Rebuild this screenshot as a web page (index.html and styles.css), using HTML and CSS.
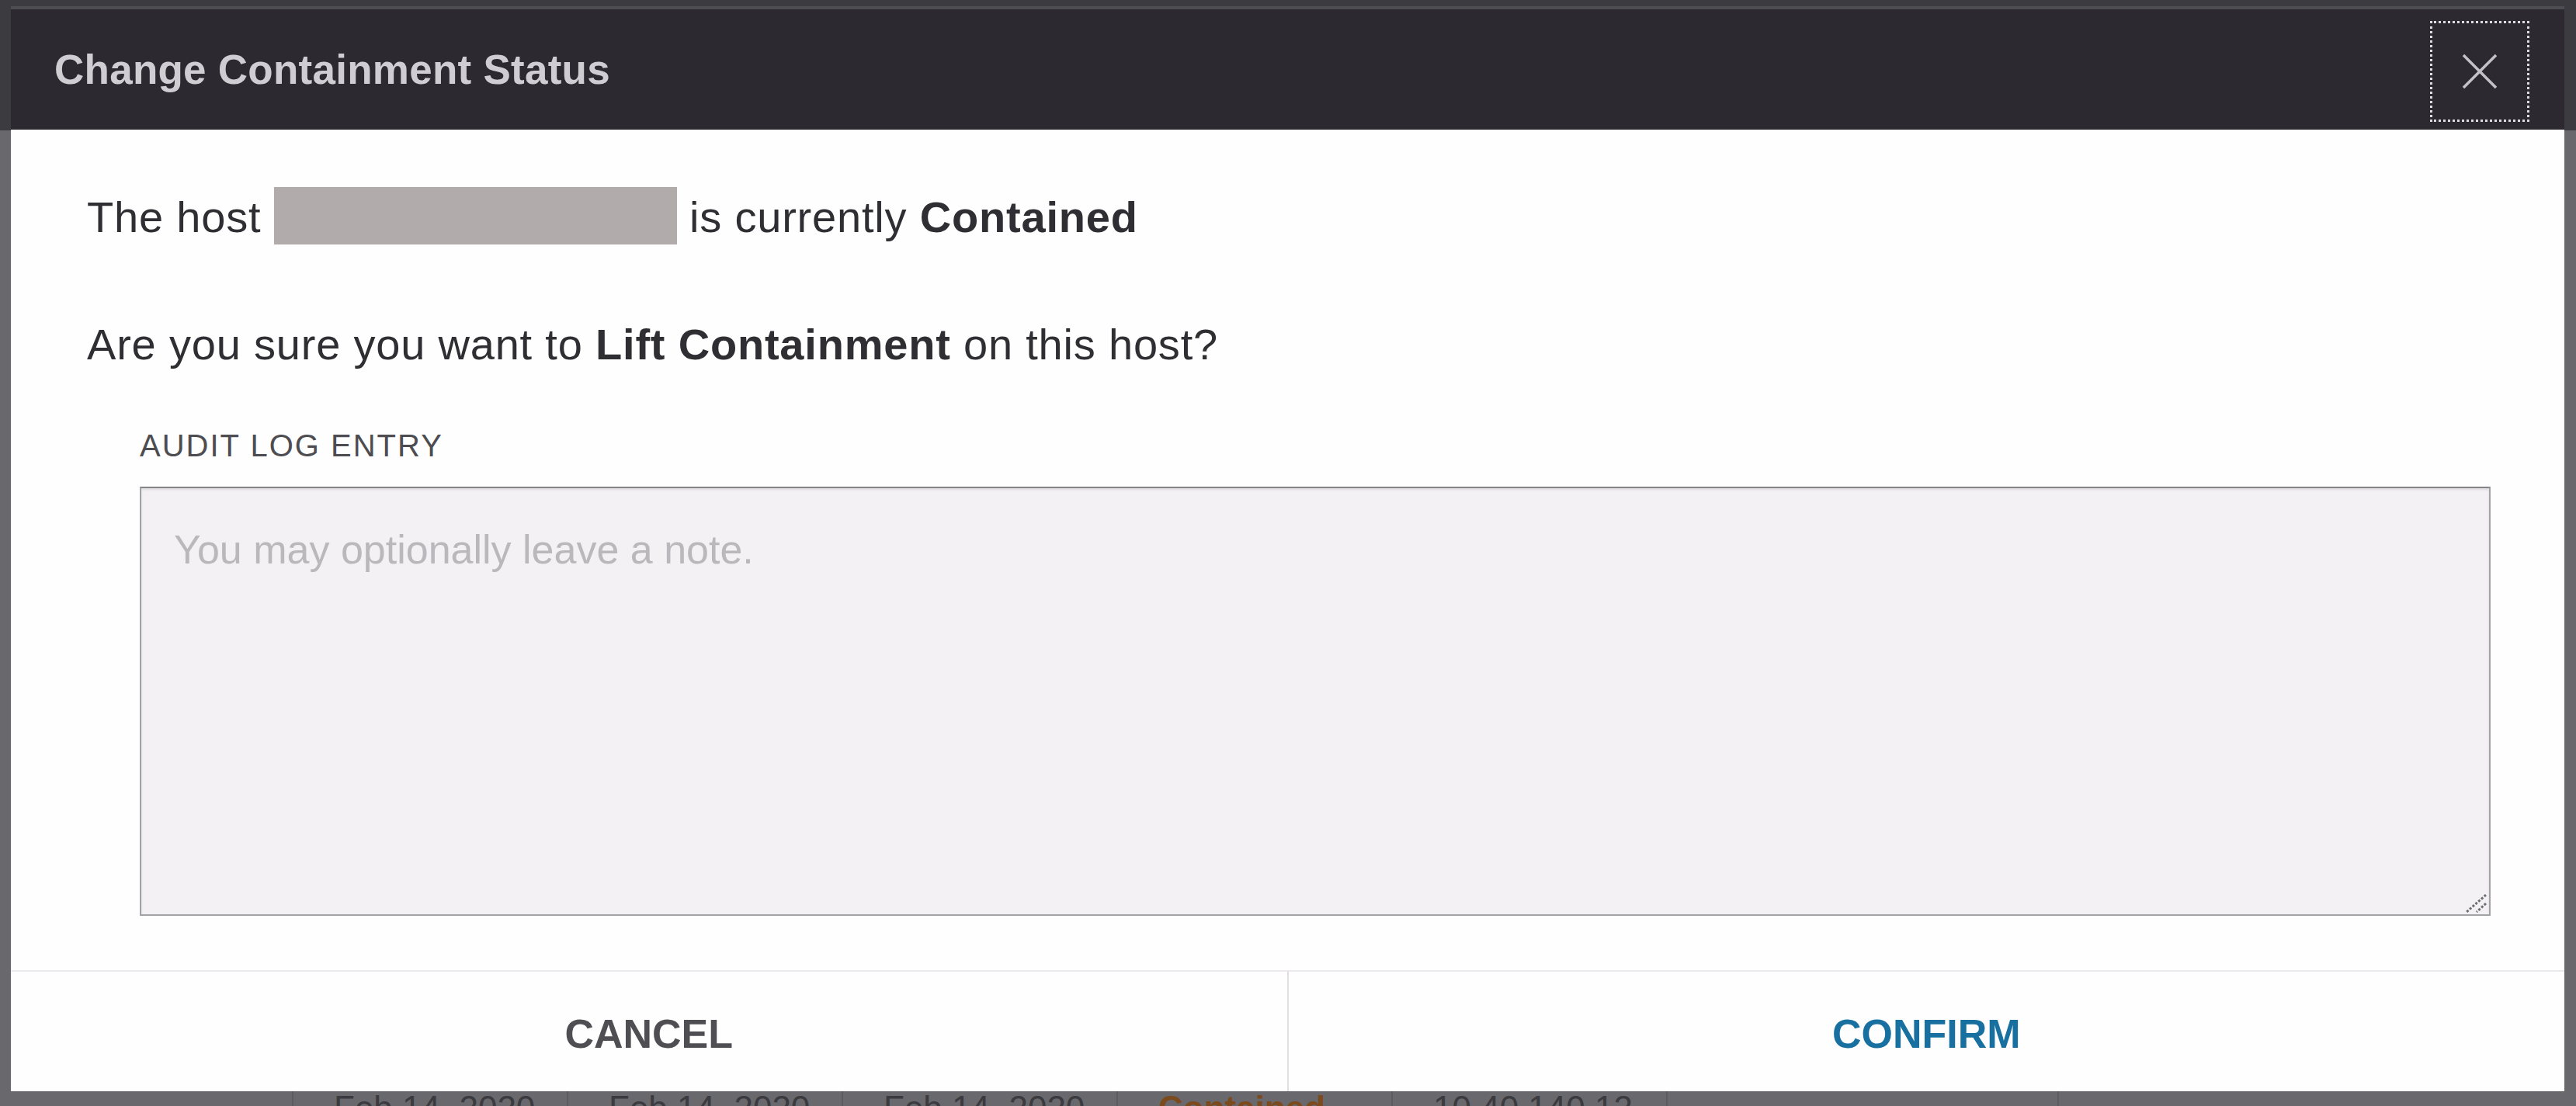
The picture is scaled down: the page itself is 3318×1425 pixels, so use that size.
FILE: index.html
```html
<!DOCTYPE html>
<html>
<head>
  <meta charset="utf-8">
  <title>Change Containment Status</title>
  <link rel="stylesheet" href="styles.css">
</head>
<body>
  <div class="backdrop">
    <div class="modal" role="dialog" aria-labelledby="modal-title">
      <div class="modal-header">
        <h2 class="modal-title" id="modal-title">Change Containment Status</h2>
        <button class="modal-close" type="button" aria-label="Close">
          <svg viewBox="0 0 46 46"><path d="M2 2 L44 44 M44 2 L2 44"/></svg>
        </button>
      </div>

      <div class="modal-body">
        <p>The host <span class="redacted"></span> is currently <strong>Contained</strong></p>
        <p class="question">Are you sure you want to <strong>Lift Containment</strong> on this host?</p>

        <div class="field">
          <label for="audit-note">Audit Log Entry</label>
          <div class="note-wrap">
            <textarea id="audit-note" placeholder="You may optionally leave a note."></textarea>
            <svg class="grip" viewBox="0 0 28 24"><path d="M26 1 L1 23 M26 12 L14 23"/></svg>
          </div>
        </div>
      </div>

      <div class="modal-footer">
        <button class="btn btn-cancel" type="button">Cancel</button>
        <button class="btn btn-confirm" type="button">Confirm</button>
      </div>
    </div>

    <!-- hosts table underneath the dialog -->
    <div class="table-peek">
      <div class="cell">Feb 14, 2020</div>
      <div class="cell">Feb 14, 2020</div>
      <div class="cell">Feb 14, 2020</div>
      <div class="cell state">Contained</div>
      <div class="cell">10.40.140.12</div>
      <div class="cell wide"></div>
      <div class="cell"></div>
    </div>
  </div>
</body>
</html>
```

FILE: styles.css
```css
html, body {
  margin: 0;
  height: 100%;
}

body {
  background: linear-gradient(#3c3b40 0, #3c3b40 168px, #69686d 168px);
  font-family: "Liberation Sans", Arial, sans-serif;
  overflow: hidden;
}

.backdrop {
  padding: 8px 15px 0 14px;
}

.modal {
  height: 1398px;
  background: #fefefe;
  display: flex;
  flex-direction: column;
}

/* header bar */
.modal-header {
  height: 155px;
  border-top: 4px solid #4e4d52;
  background: #2c2a30;
  display: flex;
  align-items: center;
  justify-content: space-between;
  padding: 0 45px 0 56px;
}

.modal-title {
  margin: 0;
  font-size: 53px;
  font-weight: bold;
  letter-spacing: 0.25px;
  color: #cfcdd2;
}

.modal-close {
  width: 128px;
  height: 130px;
  margin-top: 4px;
  padding: 0;
  background: none;
  border: 3px dotted #dedce1;
  display: flex;
  align-items: center;
  justify-content: center;
}

.modal-close svg {
  width: 46px;
  height: 46px;
  fill: none;
  stroke: #c4c2c7;
  stroke-width: 3.5;
}

/* body */
.modal-body {
  flex: 1;
  padding: 74px 95px 0 98px;
  color: #2f2e32;
  font-size: 56px;
  line-height: 1.15;
  letter-spacing: 0.8px;
}

.modal-body p {
  margin: 0;
}

.modal-body .question {
  margin-top: 97px;
}

.redacted {
  display: inline-block;
  width: 519px;
  height: 74px;
  background: #b1abab;
  vertical-align: -16px;
}

.field {
  margin: 75px 0 0 68px;
}

.field label {
  display: block;
  font-size: 40px;
  line-height: 46px;
  letter-spacing: 2px;
  text-transform: uppercase;
  color: #4d4c50;
}

.note-wrap {
  position: relative;
  margin-top: 30px;
}

.note-wrap textarea {
  display: block;
  width: 100%;
  height: 553px;
  box-sizing: border-box;
  resize: none;
  margin: 0;
  padding: 48px 42px;
  background: #f3f1f4;
  border: 2px solid #a3a2a6;
  border-top-color: #858488;
  border-radius: 0;
  box-shadow: inset 0 2px 3px rgba(0, 0, 0, 0.1);
  font-family: "Liberation Sans", Arial, sans-serif;
  font-size: 52px;
  line-height: 1.2;
  color: #2f2e32;
  outline: none;
}

.note-wrap textarea::placeholder {
  color: #bab8bc;
}

.grip {
  position: absolute;
  right: 4px;
  bottom: 4px;
  width: 28px;
  height: 24px;
  fill: none;
  stroke: #6e6d71;
  stroke-width: 3;
  stroke-dasharray: 3 2;
}

/* footer buttons */
.modal-footer {
  height: 154px;
  display: flex;
  border-top: 2px solid #ebe9ed;
}

.btn {
  flex: 1;
  padding: 6px 0 0;
  background: none;
  border: 0;
  font-family: "Liberation Sans", Arial, sans-serif;
  font-size: 52px;
  font-weight: bold;
  text-transform: uppercase;
}

.btn-cancel {
  color: #4f4e52;
  border-right: 2px solid #e0dee3;
}

.btn-confirm {
  color: #17709f;
}

/* strip of the table left visible below the dialog */
.table-peek {
  height: 19px;
  overflow: hidden;
  display: flex;
  margin-left: -14px;
  padding-left: 376px;
}

.table-peek .cell {
  width: 300px;
  flex: none;
  padding-left: 52px;
  border-left: 2px solid #5c5b60;
  font-size: 44px;
  line-height: 44px;
  color: #3b3a3e;
  white-space: nowrap;
  overflow: hidden;
}

.table-peek .state {
  color: #7b4a1d;
  font-weight: bold;
}

.table-peek .wide {
  width: 450px;
}
```
